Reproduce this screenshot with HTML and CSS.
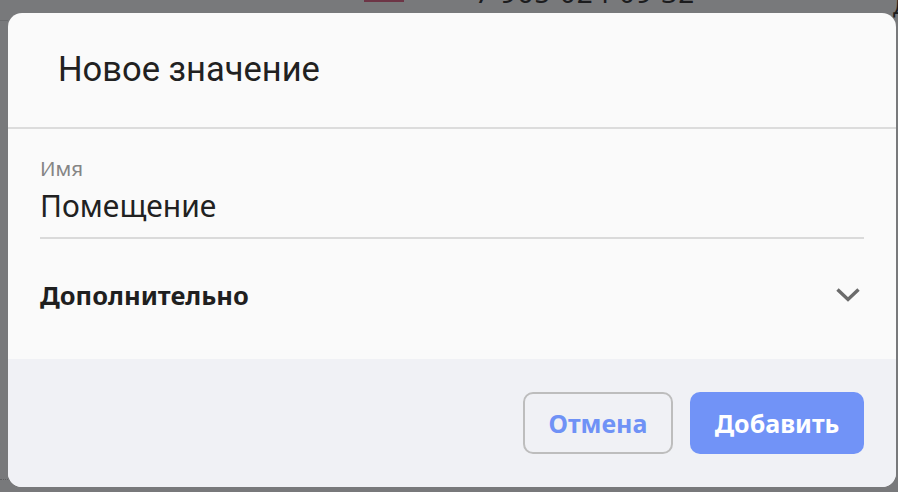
FILE: index.html
```html
<!DOCTYPE html>
<html lang="ru">
<head>
<meta charset="utf-8">
<title>Новое значение</title>
<link rel="stylesheet" href="styles.css">
</head>
<body>
<div class="page-behind">
  <div class="behind-tag"></div>
  <div class="behind-phone">+7 965 024 09 32</div>
  <div class="behind-letter">Д</div>
  <div class="behind-rule"></div>
  <div class="behind-colon">:</div>
  <div class="behind-dots"></div>
</div>
<div class="modal">
  <header class="modal-header">
    <h1 class="modal-title">Новое значение</h1>
  </header>
  <section class="modal-body">
    <div class="field">
      <label class="field-label">Имя</label>
      <div class="field-value">Помещение</div>
    </div>
    <div class="extra-row">
      <span class="extra-title">Дополнительно</span>
      <svg class="chevron" width="26" height="16" viewBox="0 0 26 16" aria-hidden="true">
        <polyline points="2.5,2.5 13,12.5 23.5,2.5" fill="none" stroke="#6b6b6b" stroke-width="3.4" stroke-linejoin="miter"/>
      </svg>
    </div>
  </section>
  <footer class="modal-footer">
    <button class="btn btn-cancel">Отмена</button>
    <button class="btn btn-primary">Добавить</button>
  </footer>
</div>
</body>
</html>
```

FILE: styles.css
```css
html, body {
  margin: 0;
  height: 100%;
}
body {
  background: #78797b;
  padding: 13px 2px 5px 8px;
  box-sizing: border-box;
  font-family: "Noto Sans", "Open Sans", sans-serif;
  overflow: hidden;
  position: relative;
}

/* Page content behind the dimmed overlay */
.page-behind {
  position: absolute;
  inset: 0;
  pointer-events: none;
}
.behind-tag {
  position: absolute;
  left: 364px;
  top: 0;
  width: 40px;
  height: 2px;
  background: #6d3546;
}
.behind-phone {
  position: absolute;
  left: 458px;
  top: -22px;
  font-size: 28px;
  line-height: 28px;
  color: #1c1c1e;
  letter-spacing: 1px;
}
.behind-letter {
  position: absolute;
  left: 893px;
  top: -6px;
  font-size: 22px;
  line-height: 22px;
  color: #1c1c1e;
}
.behind-rule {
  position: absolute;
  left: 0;
  top: 20px;
  width: 8px;
  height: 1px;
  background: #6a6b6d;
}
.behind-colon {
  position: absolute;
  left: -6px;
  top: 434px;
  font-size: 24px;
  line-height: 24px;
  font-weight: 700;
  color: #1c1c1e;
}
.behind-dots {
  position: absolute;
  left: 0;
  top: 479px;
  width: 8px;
  border-top: 1px dotted #5e5f61;
}

/* Modal */
.modal {
  position: relative;
  width: 888px;
  height: 474px;
  background: #fafafa;
  border-radius: 14px;
  overflow: hidden;
  display: flex;
  flex-direction: column;
}
.modal-header {
  height: 114px;
  border-bottom: 2px solid #dcdcdc;
  display: flex;
  align-items: center;
  padding-left: 50px;
}
.modal-title {
  margin: 0;
  font-family: Roboto, "Noto Sans", sans-serif;
  font-weight: 400;
  font-size: 34.5px;
  color: #212121;
  line-height: 1.2;
}
.modal-body {
  flex: 1;
  padding: 27px 32px 0 32px;
}
.field {
  border-bottom: 2px solid #dadada;
  padding-bottom: 13px;
}
.field-label {
  display: block;
  font-size: 20.5px;
  line-height: 1.2;
  color: #858585;
}
.field-value {
  margin-top: 7px;
  font-size: 30px;
  line-height: 1.2;
  color: #212121;
}
.extra-row {
  margin-top: 30px;
  height: 52px;
  display: flex;
  align-items: center;
  justify-content: space-between;
}
.extra-title {
  font-size: 25.5px;
  font-weight: 700;
  color: #1f1f1f;
}
.chevron {
  margin-right: 3px;
  margin-top: 1px;
}
.modal-footer {
  height: 128px;
  box-sizing: border-box;
  background: #f0f1f5;
  display: flex;
  justify-content: flex-end;
  align-items: center;
  gap: 17px;
  padding: 0 32px;
}
.btn {
  height: 62px;
  border-radius: 10px;
  font-family: "Noto Sans", "Open Sans", sans-serif;
  font-size: 25px;
  font-weight: 700;
  cursor: pointer;
}
.btn-cancel {
  width: 150px;
  background: transparent;
  border: 2px solid #bdbdbd;
  color: #6f92f6;
}
.btn-primary {
  width: 174px;
  background: #7193f7;
  border: none;
  color: #ffffff;
}
```
